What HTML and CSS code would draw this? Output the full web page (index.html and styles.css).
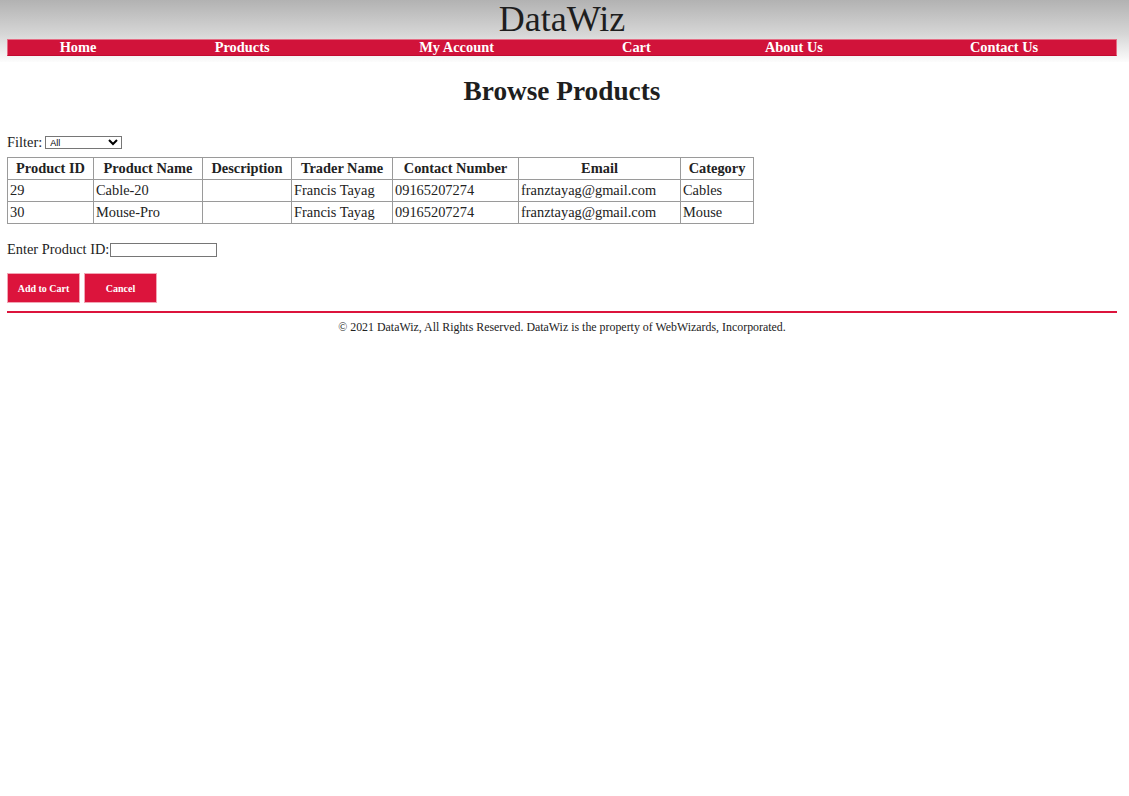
FILE: index.html
```html
<!DOCTYPE html>
<html>
<head>
<meta charset="utf-8">
<title>DataWiz - Browse Products</title>
<link rel="stylesheet" href="styles.css">
</head>
<body>
<header class="site-header">
  <h1 class="logo">DataWiz</h1>
  <nav class="nav">
    <a class="nav-item" href="#">Home</a>
    <a class="nav-item" href="#">Products</a>
    <a class="nav-item" href="#">My Account</a>
    <a class="nav-item" href="#">Cart</a>
    <a class="nav-item" href="#">About Us</a>
    <a class="nav-item" href="#">Contact Us</a>
  </nav>
</header>
<main class="content">
  <h2 class="page-title">Browse Products</h2>
  <div class="filter-row">
    <label class="filter-label" for="filter">Filter:</label>
    <select id="filter" class="filter-select">
      <option>All</option>
      <option>Cables</option>
      <option>Mouse</option>
    </select>
  </div>
  <table class="products">
    <colgroup>
      <col class="c-id"><col class="c-name"><col class="c-desc"><col class="c-trader"><col class="c-contact"><col class="c-email"><col class="c-cat">
    </colgroup>
    <thead>
      <tr><th>Product ID</th><th>Product Name</th><th>Description</th><th>Trader Name</th><th>Contact Number</th><th>Email</th><th>Category</th></tr>
    </thead>
    <tbody>
      <tr><td>29</td><td>Cable-20</td><td></td><td>Francis Tayag</td><td>09165207274</td><td>franztayag@gmail.com</td><td>Cables</td></tr>
      <tr><td>30</td><td>Mouse-Pro</td><td></td><td>Francis Tayag</td><td>09165207274</td><td>franztayag@gmail.com</td><td>Mouse</td></tr>
    </tbody>
  </table>
  <div class="id-row">
    <label class="id-label" for="pid">Enter Product ID:</label>
    <input id="pid" class="id-input" type="text">
  </div>
  <div class="actions">
    <button class="btn" type="button">Add to Cart</button>
    <button class="btn" type="button">Cancel</button>
  </div>
  <hr class="rule">
  <footer class="footer">© 2021 DataWiz, All Rights Reserved. DataWiz is the property of WebWizards, Incorporated.</footer>
</main>
</body>
</html>
```
FILE: styles.css
```css
html, body {
  margin: 0;
  padding: 0;
  background: #fff;
}
body {
  font-family: "Liberation Serif", "Times New Roman", serif;
  font-size: 14.4px;
  color: #222;
}
.site-header {
  background: linear-gradient(to bottom, #b2b2b2 0px, #d6d6d6 34px, #ffffff 64px);
  padding: 0 12px 6px 7px;
}
.logo {
  margin: 0;
  font-size: 36px;
  font-weight: normal;
  line-height: 39px;
  text-align: center;
  color: #1e1e1e;
}
.nav {
  display: table;
  width: 100%;
  box-sizing: border-box;
  background: #d1133a;
  border: 1px solid #e56c84;
  border-bottom-color: #c20a30;
}
.nav-item {
  display: table-cell;
  text-align: center;
  color: #fff;
  font-weight: bold;
  text-decoration: none;
  line-height: 15px;
  padding: 0 8px;
}
.content {
  padding: 0 12px 0 7px;
}
.page-title {
  margin: 14px 0 0;
  font-size: 27.3px;
  line-height: 31px;
  text-align: center;
  color: #1e1e1e;
}
.filter-row {
  margin-top: 27px;
  display: flex;
  align-items: center;
  height: 17px;
}
.filter-label {
  margin-right: 3px;
}
.filter-select {
  width: 77px;
  height: 13px;
  font-size: 9px;
  font-family: Arial, "Liberation Sans", sans-serif;
  padding: 0;
  border: 1px solid #767676;
  border-radius: 0;
  background: #fff;
}
.products {
  margin-top: 6px;
  border-collapse: collapse;
  table-layout: fixed;
  width: 747px;
}
.c-id { width: 86px; }
.c-name { width: 109px; }
.c-desc { width: 89px; }
.c-trader { width: 101px; }
.c-contact { width: 126px; }
.c-email { width: 162px; }
.c-cat { width: 73px; }
.products th,
.products td {
  border: 1px solid #9a9a9a;
  padding: 2px 2px;
  line-height: 17px;
  white-space: nowrap;
}
.products th {
  text-align: center;
  font-weight: bold;
}
.products td {
  text-align: left;
}
.id-row {
  margin-top: 17px;
  display: flex;
  align-items: center;
  height: 17px;
}
.id-label {
  margin-right: 0;
}
.id-input {
  margin-left: 1px;
  width: 107px;
  height: 14px;
  box-sizing: border-box;
  border: 1px solid #767676;
  padding: 0 2px;
  font-size: 12px;
}
.actions {
  margin-top: 15px;
  display: flex;
  gap: 4px;
}
.btn {
  width: 73px;
  height: 30px;
  box-sizing: border-box;
  background: #dc143c;
  color: #fff;
  border: 1px solid #f2a5b4;
  font-family: "Liberation Serif", "Times New Roman", serif;
  font-weight: bold;
  font-size: 10px;
  padding: 0;
  cursor: pointer;
}
.rule {
  margin: 8px 0 0;
  border: 0;
  height: 2px;
  background: #dc143c;
}
.footer {
  margin-top: 7px;
  text-align: center;
  font-size: 11.9px;
  line-height: 14px;
}
```
